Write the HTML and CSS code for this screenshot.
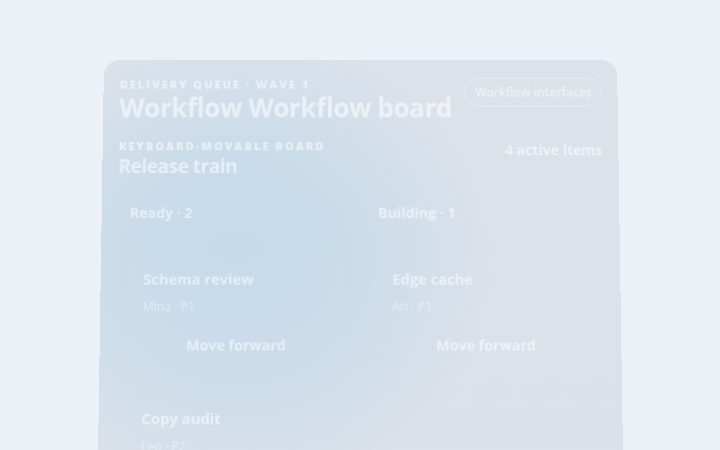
FILE: index.html
```html
<!DOCTYPE html>
<html lang="en">
<head>
<meta charset="utf-8">
<title>Workflow Workflow board</title>
<link rel="stylesheet" href="styles.css">
</head>
<body>
<div class="stage">
  <section class="panel">
    <header class="top">
      <div class="titles">
        <div class="eyebrow">Delivery queue · Wave 1</div>
        <h1 class="title">Workflow Workflow board</h1>
      </div>
      <span class="pill">Workflow interfaces</span>
    </header>
    <div class="sub">
      <div>
        <div class="eyebrow">Keyboard-movable board</div>
        <h2 class="subtitle">Release train</h2>
      </div>
      <div class="count">4 active items</div>
    </div>
    <div class="board">
      <div class="col">
        <h3 class="col-head">Ready · 2</h3>
        <div class="item">
          <div class="item-title">Schema review</div>
          <div class="item-meta">Mina · P1</div>
          <button class="move">Move forward</button>
        </div>
        <div class="item">
          <div class="item-title">Copy audit</div>
          <div class="item-meta">Leo · P2</div>
          <button class="move">Move forward</button>
        </div>
      </div>
      <div class="col">
        <h3 class="col-head">Building · 1</h3>
        <div class="item">
          <div class="item-title">Edge cache</div>
          <div class="item-meta">Ari · P1</div>
          <button class="move">Move forward</button>
        </div>
      </div>
    </div>
  </section>
</div>
</body>
</html>
```
FILE: styles.css
```css
html, body {
  margin: 0;
  padding: 0;
  height: 100%;
  overflow: hidden;
}
body {
  background: #ecf0f7;
  font-family: "Open Sans", "Noto Sans", sans-serif;
  color: rgba(255, 255, 255, 0.55);
}
.stage {
  padding-top: 60px;
  perspective: 900px;
}
.panel {
  width: 513px;
  height: 520px;
  margin: 0 auto;
  box-sizing: border-box;
  padding: 18px 16px 16px 16px;
  border-radius: 16px;
  background:
    radial-gradient(ellipse 260px 240px at 26% 38%, rgba(196, 219, 235, 1) 0%, rgba(199, 219, 234, 0.85) 45%, rgba(210, 222, 234, 0) 100%),
    linear-gradient(180deg, #dde2ea 0%, #dbe1e9 100%);
  transform-origin: 50% 0;
  transform: rotateX(3deg);
}
.top {
  display: flex;
  justify-content: space-between;
  align-items: flex-start;
  gap: 12px;
}
.eyebrow {
  font-size: 11px;
  font-weight: 800;
  letter-spacing: 2px;
  text-transform: uppercase;
  line-height: 14px;
  white-space: nowrap;
}
.title {
  margin: 0;
  font-size: 26px;
  font-weight: 700;
  letter-spacing: -0.4px;
  line-height: 30px;
  padding-top: 1px;
  white-space: nowrap;
}
.pill {
  flex: none;
  margin-right: 1px;
  padding: 5px 10px;
  font-size: 12px;
  font-weight: 600;
  line-height: 17px;
  white-space: nowrap;
  border: 1px solid rgba(255, 255, 255, 0.35);
  border-radius: 999px;
}
.sub {
  display: flex;
  justify-content: space-between;
  align-items: flex-start;
  margin-top: 17px;
}
.subtitle {
  margin: 0;
  font-size: 19px;
  font-weight: 700;
  letter-spacing: -0.5px;
  line-height: 26px;
}
.count {
  font-size: 14px;
  font-weight: 700;
  line-height: 20px;
  margin-top: 1px;
}
.board {
  display: grid;
  grid-template-columns: 236px 236px;
  gap: 10px;
  margin-top: 12px;
}
.col {
  padding: 12px 12px;
  display: flex;
  flex-direction: column;
  gap: 10px;
}
.col-head {
  margin: 0 0 22px 0;
  font-size: 14px;
  font-weight: 700;
  line-height: 20px;
}
.item {
  padding: 14px 14px 18px 14px;
  border-radius: 12px;
  background: rgba(255, 255, 255, 0.02);
  display: flex;
  flex-direction: column;
}
.item-title {
  font-size: 14.5px;
  font-weight: 700;
  line-height: 20px;
}
.item-meta {
  margin-top: 9px;
  font-size: 12px;
  line-height: 16px;
  color: rgba(255, 255, 255, 0.45);
}
.move {
  margin-top: 8px;
  height: 42px;
  border: none;
  background: transparent;
  font-family: inherit;
  font-size: 14px;
  font-weight: 700;
  color: rgba(255, 255, 255, 0.55);
  cursor: pointer;
}
```
